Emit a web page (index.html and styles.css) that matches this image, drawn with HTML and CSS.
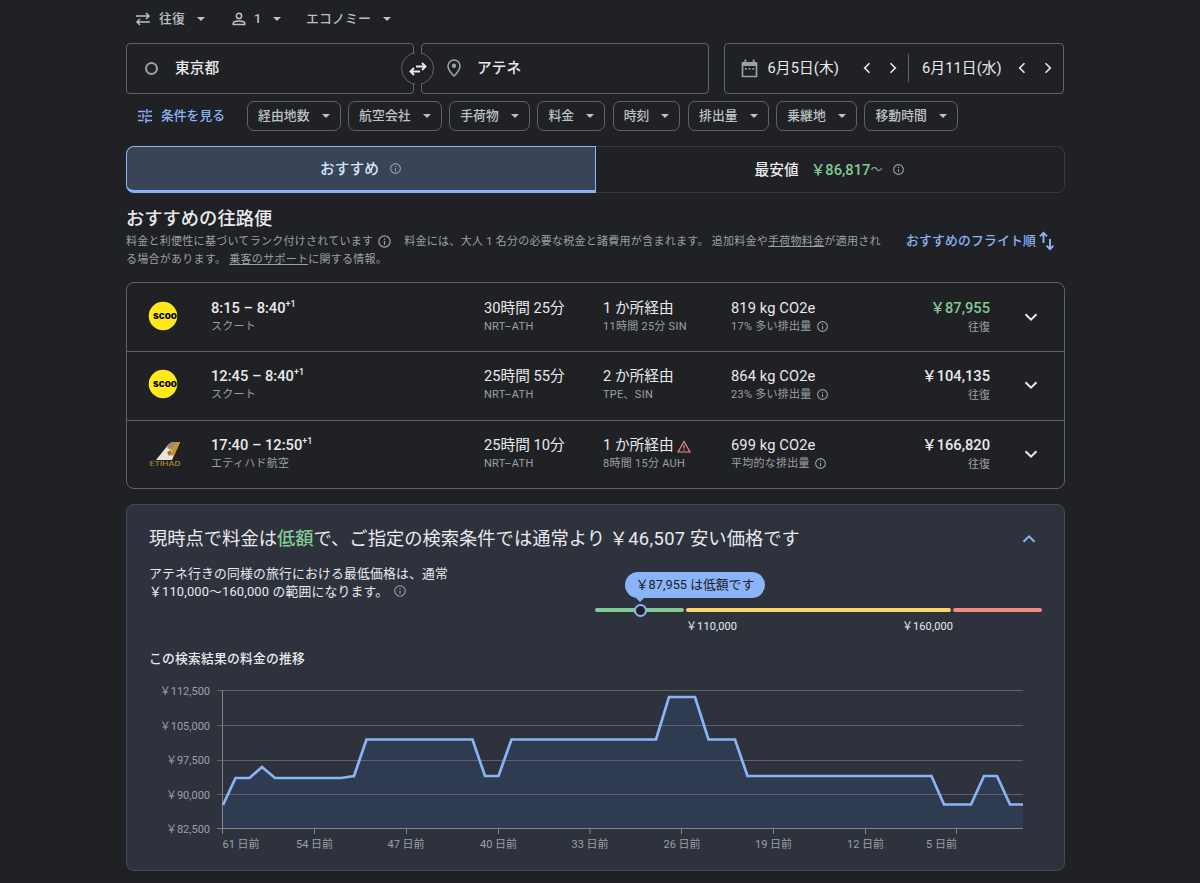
FILE: index.html
```html
<!DOCTYPE html>
<html lang="ja">

<head>
  <meta charset="UTF-8">
  <meta name="viewport" content="width=device-width, initial-scale=1.0">
  <title>東京都 - アテネ | フライト</title>
  <link rel="stylesheet" href="styles.css">
</head>

<body>
  <!-- Shared icons -->
  <svg class="sprite" aria-hidden="true">
    <symbol id="caret" viewBox="0 0 8 4"><path d="M0 0h8L4 4z" fill="currentColor"/></symbol>
    <symbol id="info" viewBox="0 0 24 24"><path d="M11 7h2v2h-2zm0 4h2v6h-2zm1-9a10 10 0 1 0 0 20 10 10 0 0 0 0-20zm0 18a8 8 0 1 1 0-16 8 8 0 0 1 0 16z" fill="currentColor"/></symbol>
    <symbol id="chevron" viewBox="0 0 14 14"><path d="M1.500 4.200L7 9.700l5.500-5.500" fill="none" stroke="currentColor" stroke-width="2"/></symbol>
    <symbol id="angle" viewBox="0 0 8 12"><path d="M6.500 1.200L1.700 6l4.800 4.800" fill="none" stroke="currentColor" stroke-width="1.600"/></symbol>
  </svg>

  <div class="container">
    <div class="trip-options">
      <div class="option trip-type">
        <svg class="swap-icon" viewBox="0 0 16 14"><path d="M1 4h13M11 1l3 3-3 3M15 10H2M5 7l-3 3 3 3" fill="none" stroke="currentColor" stroke-width="1.500"/></svg>
        <span>往復</span>
        <svg class="caret"><use href="#caret"/></svg>
      </div>
      <div class="option passengers">
        <svg class="person-icon" viewBox="0 0 14 14"><path d="M7 1.300a2.600 2.600 0 1 1 0 5.200 2.600 2.600 0 0 1 0-5.200zM1.200 12.500v-1.300c0-3.100 11.600-3.100 11.600 0v1.300z" fill="none" stroke="currentColor" stroke-width="1.500"/></svg>
        <span>1</span>
        <svg class="caret"><use href="#caret"/></svg>
      </div>
      <div class="option">
        <span>エコノミー</span>
        <svg class="caret"><use href="#caret"/></svg>
      </div>
    </div>

    <div class="search">
      <div class="places">
        <div class="field origin"><span class="ring"></span><span>東京都</span></div>
        <div class="field destination">
          <svg class="pin-icon" viewBox="0 0 14 18"><path d="M7 1a6 6 0 0 0-6 6c0 4.200 6 10 6 10s6-5.800 6-10a6 6 0 0 0-6-6z" fill="none" stroke="currentColor" stroke-width="1.600"/><circle cx="7" cy="6.800" r="2.200" fill="currentColor"/></svg>
          <span>アテネ</span>
        </div>
        <button class="swap-button" aria-label="入れ替え">
          <svg viewBox="0 0 18 14"><path d="M7 4.500h9.500M13 1l3.500 3.500L13 8M11 9.500H1.500M5 6L1.500 9.500 5 13" fill="none" stroke="currentColor" stroke-width="1.900"/></svg>
        </button>
      </div>
      <div class="field dates">
        <svg class="calendar-icon" viewBox="0 0 17 19"><path d="M1.500 4h14v13.500h-14z" fill="none" stroke="currentColor" stroke-width="1.700"/><path d="M1 3h15v4H1zM3.500.500h1.800v3H3.500zM11.700.500h1.800v3h-1.800zM4 9h1.700v1.700H4zM7.700 9h1.700v1.700H7.700zM11.400 9h1.700v1.700h-1.700z" fill="currentColor"/></svg>
        <span class="date">6月5日(木)</span>
        <svg class="angle"><use href="#angle"/></svg>
        <svg class="angle next"><use href="#angle"/></svg>
        <span class="divider"></span>
        <span class="date return">6月11日(水)</span>
        <svg class="angle"><use href="#angle"/></svg>
        <svg class="angle next"><use href="#angle"/></svg>
      </div>
    </div>

    <div class="filters">
      <div class="all-filters">
        <svg class="tune-icon" viewBox="0 0 14 14"><path d="M0 2.500h7.500M10.500 2.500H14M9 0v5M0 7h3M6.500 7H14M5 4.500v5M0 11.500h5.500M8.500 11.500H14M8 9v5" fill="none" stroke="currentColor" stroke-width="1.500"/></svg>
        <span>条件を見る</span>
      </div>
      <div class="chip">経由地数<svg class="caret"><use href="#caret"/></svg></div>
      <div class="chip">航空会社<svg class="caret"><use href="#caret"/></svg></div>
      <div class="chip">手荷物<svg class="caret"><use href="#caret"/></svg></div>
      <div class="chip">料金<svg class="caret"><use href="#caret"/></svg></div>
      <div class="chip">時刻<svg class="caret"><use href="#caret"/></svg></div>
      <div class="chip">排出量<svg class="caret"><use href="#caret"/></svg></div>
      <div class="chip">乗継地<svg class="caret"><use href="#caret"/></svg></div>
      <div class="chip">移動時間<svg class="caret"><use href="#caret"/></svg></div>
    </div>

    <div class="tabs">
      <div class="tab active">おすすめ<svg class="info"><use href="#info"/></svg></div>
      <div class="tab">最安値<span class="tab-price">&#xFFE5;86,817</span><span class="from">〜</span><svg class="info"><use href="#info"/></svg></div>
    </div>

    <h2>おすすめの往路便</h2>
    <div class="summary">
      <p>料金と利便性に基づいてランク付けされています<svg class="info"><use href="#info"/></svg>料金には、大人 1 名分の必要な税金と諸費用が含まれます。 追加料金や<u>手荷物料金</u>が適用される場合があります。 <u>乗客のサポート</u>に関する情報。</p>
      <div class="sort">
        <span>おすすめのフライト順</span>
        <svg viewBox="0 0 16 20"><path d="M4.500 12V2M1 5.300l3.500-3.500L8 5.300M11 8v10M7.500 14.700l3.500 3.500 3.500-3.500" fill="none" stroke="currentColor" stroke-width="1.900"/></svg>
      </div>
    </div>

    <div class="flights">
      <div class="flight">
        <svg class="logo" viewBox="0 0 30 30">
          <circle cx="15" cy="15" r="14.300" fill="#ffe81c"/>
          <text x="5" y="18" textLength="24" lengthAdjust="spacingAndGlyphs" class="scoot-text">scoo</text>
        </svg>
        <div class="times"><strong>8:15 – 8:40<sup>+1</sup></strong><small>スクート</small></div>
        <div class="duration"><b>30時間 25分</b><small>NRT–ATH</small></div>
        <div class="stops"><b>1 か所経由</b><small>11時間 25分 SIN</small></div>
        <div class="co2"><b>819 kg CO2e</b><small>17% 多い排出量<svg class="info"><use href="#info"/></svg></small></div>
        <div class="price low"><strong>&#xFFE5;87,955</strong><small>往復</small></div>
        <svg class="chevron"><use href="#chevron"/></svg>
      </div>
      <div class="flight">
        <svg class="logo" viewBox="0 0 30 30">
          <circle cx="15" cy="15" r="14.300" fill="#ffe81c"/>
          <text x="5" y="18" textLength="24" lengthAdjust="spacingAndGlyphs" class="scoot-text">scoo</text>
        </svg>
        <div class="times"><strong>12:45 – 8:40<sup>+1</sup></strong><small>スクート</small></div>
        <div class="duration"><b>25時間 55分</b><small>NRT–ATH</small></div>
        <div class="stops"><b>2 か所経由</b><small>TPE、SIN</small></div>
        <div class="co2"><b>864 kg CO2e</b><small>23% 多い排出量<svg class="info"><use href="#info"/></svg></small></div>
        <div class="price"><strong>&#xFFE5;104,135</strong><small>往復</small></div>
        <svg class="chevron"><use href="#chevron"/></svg>
      </div>
      <div class="flight">
        <svg class="logo etihad" viewBox="0 0 32 30">
          <path d="M7 22L19 7q2-2.500 5-3h7l-8 18z" fill="#e9e3dc"/>
          <path d="M19 7q2-2.500 5-3h7l-3 7-5 1-5-2z" fill="#a08a68"/>
          <path d="M27 4h4l-5.500 13-3 1 1-7z" fill="#c8912c"/>
          <path d="M18 14l4-2 1 4-3 2z" fill="#a87324"/>
          <text x="0.500" y="27.500" textLength="31" lengthAdjust="spacingAndGlyphs" class="etihad-text">ETIHAD</text>
        </svg>
        <div class="times"><strong>17:40 – 12:50<sup>+1</sup></strong><small>エティハド航空</small></div>
        <div class="duration"><b>25時間 10分</b><small>NRT–ATH</small></div>
        <div class="stops"><b>1 か所経由<svg class="warning" viewBox="0 0 14 13"><path d="M7 1.500L13 12H1z" fill="none" stroke="currentColor" stroke-width="1.200"/><path d="M6.400 5h1.200v3.500H6.400zM6.400 9.300h1.200v1.200H6.400z" fill="currentColor"/></svg></b><small>8時間 15分 AUH</small></div>
        <div class="co2"><b>699 kg CO2e</b><small>平均的な排出量<svg class="info"><use href="#info"/></svg></small></div>
        <div class="price"><strong>&#xFFE5;166,820</strong><small>往復</small></div>
        <svg class="chevron"><use href="#chevron"/></svg>
      </div>
    </div>

    <div class="insights">
      <div class="insights-header">
        <h3>現時点で料金は<em>低額</em>で、ご指定の検索条件では通常より <span class="amount">&#xFFE5;46,507</span> 安い価格です</h3>
        <svg class="chevron up"><use href="#chevron"/></svg>
      </div>
      <div class="range-row">
        <p>アテネ行きの同様の旅行における最低価格は、通常<br>&#xFFE5;110,000〜160,000 の範囲になります。<svg class="info"><use href="#info"/></svg></p>
        <div class="range">
          <div class="range-bar">
            <span class="low"></span><span class="typical"></span><span class="high"></span>
            <span class="marker"></span>
            <span class="bubble">&#xFFE5;87,955 は低額です</span>
          </div>
          <div class="range-labels"><span>&#xFFE5;110,000</span><span>&#xFFE5;160,000</span></div>
        </div>
      </div>

      <h4>この検索結果の料金の推移</h4>
      <svg class="chart" viewBox="149 680 893 176">
        <path class="area" d="M223 828V805l12.500-27h14l12.500-11 13 11h66l13-2 12.500-36.500h106L485 776h13.500l13-36.500H656l13-42.500h26l13.500 42.500H735l12.500 36.500h184l12.500 28.500h27l13-28.500h13l13 28.500h13V828z"/>
        <path class="grid" d="M217 690.500h806M217 725.500h806M217 760.500h806M217 794.500h806"/>
        <path class="axis" d="M217 828.500h806M222.500 690v144M314.500 829v5M406.500 829v5M498.500 829v5M590 829v5M681.500 829v5M773.500 829v5M865.500 829v5M956.500 829v5"/>
        <path class="line" d="M223 805l12.500-27h14l12.500-11 13 11h66l13-2 12.500-36.500h106L485 776h13.500l13-36.500H656l13-42.500h26l13.500 42.500H735l12.500 36.500h184l12.500 28.500h27l13-28.500h13l13 28.500h13"/>
        <g class="y-labels">
          <text x="210" y="694.500">&#xFFE5;112,500</text>
          <text x="210" y="729.500">&#xFFE5;105,000</text>
          <text x="210" y="764">&#xFFE5;97,500</text>
          <text x="210" y="798.500">&#xFFE5;90,000</text>
          <text x="210" y="833">&#xFFE5;82,500</text>
        </g>
        <g class="x-labels">
          <text x="241" y="848">61 日前</text>
          <text x="314.500" y="848">54 日前</text>
          <text x="406" y="848">47 日前</text>
          <text x="498.500" y="848">40 日前</text>
          <text x="590" y="848">33 日前</text>
          <text x="682" y="848">26 日前</text>
          <text x="773.500" y="848">19 日前</text>
          <text x="865.500" y="848">12 日前</text>
          <text x="941.500" y="848">5 日前</text>
        </g>
      </svg>
    </div>
  </div>
</body>

</html>
```
FILE: styles.css
```css
* {
  margin: 0;
  padding: 0;
  box-sizing: border-box;
}

body {
  font-family: Roboto, 'Noto Sans CJK JP', sans-serif;
  font-size: 12.8px;
  line-height: 18px;
  background: #202124;
  color: #e8eaed;
  height: 883px;
  overflow: hidden;
}

svg {
  display: block;
  flex-shrink: 0;
}

.sprite {
  position: absolute;
  width: 0;
  height: 0;
}

.container {
  width: 939px;
  margin-left: 126px;
}

.caret {
  width: 8px;
  height: 4px;
}

.info {
  width: 13px;
  height: 13px;
  color: #9aa0a6;
}

/* Trip options */
.trip-options {
  display: flex;
  height: 43px;
  padding: 8px 0 0 9px;
  color: #bdc1c6;
}

.option {
  display: flex;
  align-items: center;
  height: 21px;
  font-weight: 500;
  letter-spacing: 0.2px;
}

.option .caret {
  margin-left: 12px;
}

.trip-type {
  width: 97px;
}

.swap-icon {
  width: 16px;
  height: 14px;
  margin-right: 8px;
}

.passengers {
  width: 74px;
}

.person-icon {
  width: 14px;
  height: 14px;
  margin-right: 8px;
}

/* Search fields */
.search {
  display: flex;
  gap: 15px;
}

.places {
  position: relative;
  display: flex;
  gap: 7px;
}

.field {
  display: flex;
  align-items: center;
  height: 51px;
  padding-bottom: 1px;
  border: 1px solid #5f6368;
  border-radius: 4px;
  font-size: 14.7px;
}

.origin,
.destination {
  width: 288px;
  padding-left: 18px;
  font-weight: 500;
}

.destination {
  padding-left: 25px;
}

.ring {
  width: 13px;
  height: 13px;
  margin-right: 17px;
  border: 2.5px solid #9aa0a6;
  border-radius: 50%;
}

.pin-icon {
  width: 14px;
  height: 18px;
  margin-right: 16px;
  color: #9aa0a6;
}

.swap-button {
  position: absolute;
  left: 275px;
  top: 9px;
  width: 33px;
  height: 33px;
  display: flex;
  align-items: center;
  justify-content: center;
  border: 1px solid #5f6368;
  border-radius: 50%;
  background: #202124;
  color: #e8eaed;
}

/* Hides the circle outline between the two fields */
.swap-button::before {
  content: '';
  position: absolute;
  left: 13px;
  top: -2px;
  width: 6px;
  height: 35px;
  background: #202124;
}

.swap-button svg {
  position: relative;
  width: 18px;
  height: 14px;
}

.dates {
  width: 340px;
  padding-left: 16px;
}

.calendar-icon {
  width: 17px;
  height: 19px;
  margin-right: 9.5px;
  color: #9aa0a6;
}

.date {
  width: 95.5px;
  letter-spacing: 0.1px;
}

.date.return {
  margin-left: 13px;
}

.angle {
  width: 8px;
  height: 12px;
}

.angle.next {
  margin-left: 18px;
  transform: scaleX(-1);
}

.divider {
  width: 1px;
  height: 28px;
  margin-left: 11px;
  background: #5f6368;
}

/* Filters */
.filters {
  display: flex;
  gap: 7.5px;
  padding-top: 7px;
  font-weight: 500;
}

.all-filters {
  display: flex;
  align-items: center;
  width: 113.5px;
  height: 30px;
  padding-left: 12px;
  color: #8ab4f8;
}

.tune-icon {
  width: 14px;
  height: 14px;
  margin-right: 9px;
}

.chip {
  display: flex;
  align-items: center;
  height: 30px;
  padding: 0 10px;
  border: 1px solid #5f6368;
  border-radius: 7px;
  color: #bdc1c6;
  letter-spacing: 0.1px;
}

.chip .caret {
  margin-left: 12px;
}

/* Tabs */
.tabs {
  display: flex;
  height: 47px;
  margin-top: 15px;
}

.tab {
  flex: 1;
  display: flex;
  align-items: center;
  justify-content: center;
  border: 1px solid #36383c;
  border-left: none;
  border-radius: 0 8px 8px 0;
  font-size: 14.7px;
  font-weight: 500;
}

.tab.active {
  border: 1px solid #8ab4f8;
  border-bottom-width: 3px;
  border-radius: 8px 0 0 8px;
  background: #394457;
  color: #d2e3fc;
}

.tab .info {
  margin-left: 10px;
}

.tab-price {
  margin-left: 12px;
  color: #81c995;
}

.from {
  color: #9aa0a6;
  font-size: 12px;
  font-weight: 400;
}

h2 {
  height: 39px;
  padding-top: 11px;
  font-size: 18.3px;
  font-weight: 500;
  line-height: 29px;
}

.summary {
  display: flex;
  justify-content: space-between;
  height: 50px;
}

.summary p {
  width: 760px;
  padding-top: 1px;
  color: #9aa0a6;
  font-size: 11px;
  line-height: 18px;
  letter-spacing: 0.27px;
}

.summary .info {
  display: inline-block;
  width: 15px;
  height: 15px;
  margin: 0 12px 0 4px;
  vertical-align: -4px;
}

.sort {
  display: flex;
  height: 18px;
  align-items: center;
  margin-right: 10px;
  color: #8ab4f8;
  font-weight: 500;
  letter-spacing: 0.2px;
}

.sort svg {
  width: 16px;
  height: 20px;
  margin-left: 3px;
}

/* Flight list */
.flights {
  border: 1px solid #5f6368;
  border-radius: 8px;
}

.flight {
  display: grid;
  grid-template-columns: 62px 273px 119px 128px 149px 110px 1fr;
  height: 68px;
  padding: 15px 0 0 22px;
}

.flight + .flight {
  height: 69px;
  padding-top: 14px;
  border-top: 1px solid #5f6368;
}

.flight:last-child {
  height: 68px;
}

.flight b,
.flight strong {
  display: flex;
  align-items: center;
  height: 20px;
  font-size: 14.7px;
  font-weight: 400;
}

.flight strong {
  font-weight: 500;
}

.flight small {
  display: flex;
  align-items: center;
  height: 17px;
  color: #9aa0a6;
  font-size: 11px;
  letter-spacing: 0.27px;
}

.co2 b {
  letter-spacing: 0.1px;
}

.flight sup {
  font-size: 9px;
  margin-bottom: 8px;
}

.flight .info {
  width: 13px;
  height: 13px;
  margin-left: 4px;
}

.logo {
  width: 30px;
  height: 30px;
  margin: 3px 0 0 -1px;
}

.logo.etihad {
  width: 32px;
  margin-left: 0;
}

.scoot-text {
  font: 800 9.5px Inter, sans-serif;
}

.etihad-text {
  font: 600 5.5px Inter, sans-serif;
  fill: #a8822e;
}

.stops .warning {
  width: 14px;
  height: 13px;
  margin: 2px 0 0 3px;
  color: #f28b82;
}

.price {
  display: flex;
  flex-direction: column;
  align-items: flex-end;
}

.price small {
  height: 19px;
  letter-spacing: 0;
}

.price.low strong {
  color: #81c995;
}

.chevron {
  width: 14px;
  height: 14px;
  justify-self: center;
  margin: 12px 0 0 8px;
}

/* Price insights */
.insights {
  height: 367px;
  margin-top: 15px;
  padding: 20px 22px 0;
  border: 1px solid #3c4a5e;
  border-radius: 8px;
  background: #2e323d;
}

.insights-header {
  display: flex;
  justify-content: space-between;
  height: 40px;
}

h3 {
  font-size: 18.3px;
  font-weight: 400;
  line-height: 28px;
}

h3 em {
  color: #81c995;
  font-style: normal;
  font-weight: 500;
}

.amount {
  letter-spacing: 0.4px;
}

.chevron.up {
  margin: 7px 6px 0 0;
  transform: scaleY(-1);
  color: #8ab4f8;
}

.range-row {
  display: flex;
  justify-content: space-between;
  height: 84px;
}

.range-row p {
  line-height: 18px;
  letter-spacing: 0.2px;
}

.range-row .info {
  display: inline-block;
  width: 14px;
  height: 14px;
  margin-left: 5px;
  vertical-align: -2px;
}

.range {
  width: 447px;
  padding-top: 43px;
}

.range-bar {
  position: relative;
  display: flex;
  gap: 2px;
}

.range-bar .low,
.range-bar .typical,
.range-bar .high {
  width: 89px;
  height: 4px;
  border-radius: 2px;
  background: #81c995;
}

.range-bar .typical {
  flex: 1;
  background: #fdd663;
}

.range-bar .high {
  background: #f28b82;
}

.marker {
  position: absolute;
  left: 39px;
  top: -4px;
  width: 13px;
  height: 13px;
  border: 2px solid #8ab4f8;
  border-radius: 50%;
  background: #202124;
}

.bubble {
  position: absolute;
  left: 30px;
  top: -36px;
  width: 140px;
  height: 26px;
  border-radius: 13px;
  background: #8ab4f8;
  color: #202124;
  line-height: 26px;
  text-align: center;
  white-space: nowrap;
}

.bubble::after {
  content: '';
  position: absolute;
  left: 11px;
  top: 26px;
  border: 4px solid transparent;
  border-top-color: #8ab4f8;
  border-bottom: none;
}

.range-labels {
  display: flex;
  justify-content: space-between;
  padding: 7px 89px 0 91px;
  font-size: 11px;
  line-height: 16px;
  letter-spacing: 0.1px;
}

h4 {
  height: 31px;
  font-size: 12.8px;
  font-weight: 500;
  line-height: 20px;
  letter-spacing: 0.2px;
}

.chart {
  width: 893px;
  height: 176px;
}

.chart text {
  fill: #9aa0a6;
  font-size: 11px;
}

.y-labels {
  text-anchor: end;
}

.x-labels {
  text-anchor: middle;
}

.grid,
.axis {
  fill: none;
  stroke: #5f6368;
}

.axis {
  stroke: #80868b;
}

.area {
  fill: #2f3b50;
}

.line {
  fill: none;
  stroke: #8ab4f8;
  stroke-width: 2.7;
}
```
